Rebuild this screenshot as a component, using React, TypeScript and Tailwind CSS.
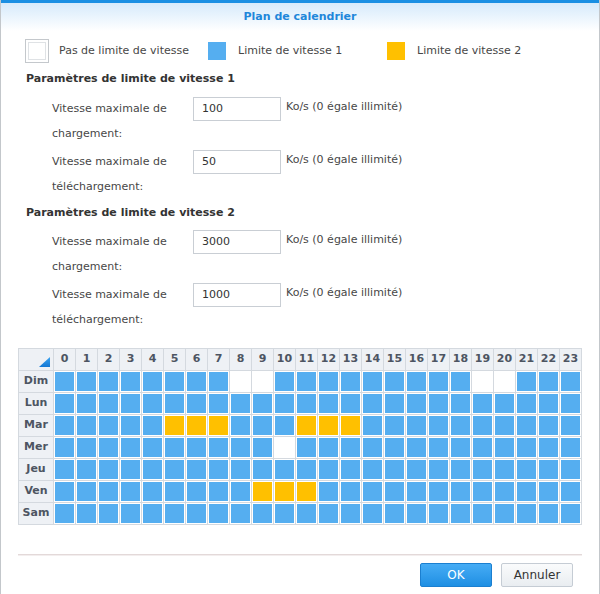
import React from "react";

const DAYS = ["Dim", "Lun", "Mar", "Mer", "Jeu", "Ven", "Sam"];
const HOURS = Array.from({ length: 24 }, (_, i) => i);

// 0 = pas de limite, 1 = limite 1, 2 = limite 2
const WHITE: Record<string, number[]> = { Dim: [8, 9, 19, 20], Mer: [10] };
const YELLOW: Record<string, number[]> = { Mar: [5, 6, 7, 11, 12, 13], Ven: [9, 10, 11] };

function level(day: string, h: number) {
  if (WHITE[day]?.includes(h)) return 0;
  if (YELLOW[day]?.includes(h)) return 2;
  return 1;
}

function Field({ line1, line2, value }: { line1: string; line2: string; value: string }) {
  return (
    <div className="flex pl-[51px]">
      <div className="w-[141px] leading-[25px] text-[#474747]">
        <div>{line1}</div>
        <div>{line2}</div>
      </div>
      <div className="mt-[1px] flex h-[24px] w-[88px] items-center border border-[#c9ced4] bg-white pl-[8px] text-[#333]">
        {value}
      </div>
      <div className="ml-[5px] leading-[22px] text-[#474747]">Ko/s (0 égale illimité)</div>
    </div>
  );
}

function Cell({ lvl }: { lvl: number }) {
  const fill = lvl === 0 ? "bg-white" : lvl === 1 ? "bg-[#55aef0]" : "bg-[#ffc000]";
  return (
    <div className="h-[21px] w-[21px] bg-white p-px">
      <div className={`h-full w-full ${fill}`} />
    </div>
  );
}

export default function App() {
  return (
    <div className="flex h-[594px] w-[600px] flex-col border-x border-[#c3c7cb] bg-white font-['DejaVu_Sans',sans-serif] text-[11px]">
      <div className="h-[3px] bg-[#1a8fe3]" />
      <div className="flex h-[28px] items-center justify-center bg-gradient-to-b from-[#d6eafb] to-white font-bold text-[#1f87da]">
        Plan de calendrier
      </div>

      {/* légende */}
      <div className="mt-[8px] flex h-[24px] items-center pl-[24px] text-[#474747]">
        <div className="flex w-[183px] items-center">
          <div className="h-[24px] w-[24px] border border-[#c4c8cc] p-[2px]">
            <div className="h-full w-full border border-[#dfe2e5]" />
          </div>
          <span className="ml-[10px]">Pas de limite de vitesse</span>
        </div>
        <div className="flex w-[179px] items-center">
          <div className="h-[18px] w-[18px] bg-[#55aef0]" />
          <span className="ml-[12px]">Limite de vitesse 1</span>
        </div>
        <div className="flex items-center">
          <div className="h-[18px] w-[18px] bg-[#ffc000]" />
          <span className="ml-[12px]">Limite de vitesse 2</span>
        </div>
      </div>

      <div className="mt-[9px] pl-[25px] font-bold leading-[14px] text-[#333]">Paramètres de limite de vitesse 1</div>
      <div className="mt-[10px] flex flex-col gap-[3px]">
        <Field line1="Vitesse maximale de" line2="chargement:" value="100" />
        <Field line1="Vitesse maximale de" line2="téléchargement:" value="50" />
      </div>

      <div className="mt-[7px] pl-[25px] font-bold leading-[14px] text-[#333]">Paramètres de limite de vitesse 2</div>
      <div className="mt-[9px] flex flex-col gap-[3px]">
        <Field line1="Vitesse maximale de" line2="chargement:" value="3000" />
        <Field line1="Vitesse maximale de" line2="téléchargement:" value="1000" />
      </div>

      {/* grille horaire */}
      <div className="ml-[17px] mt-[16px] grid w-fit grid-cols-[34px_repeat(24,21px)] gap-px border border-[#d4d9df] bg-[#d4d9df]">
        <div className="flex h-[21px] items-end justify-end bg-[#eef1f5] p-[3px]">
          <svg width="11" height="10" viewBox="0 0 11 10">
            <defs>
              <linearGradient id="tri" x1="0" y1="0" x2="0" y2="1">
                <stop offset="0" stopColor="#3aa3f0" />
                <stop offset="1" stopColor="#1478d4" />
              </linearGradient>
            </defs>
            <polygon points="11,0 11,10 0,10" fill="url(#tri)" />
          </svg>
        </div>
        {HOURS.map((h) => (
          <div key={h} className="flex h-[21px] items-center justify-center bg-[#eef1f5] font-bold text-[#4d5562]">
            {h}
          </div>
        ))}
        {DAYS.map((d) => (
          <React.Fragment key={d}>
            <div className="flex h-[21px] items-center justify-center bg-[#eef1f5] font-bold text-[#4d5562]">{d}</div>
            {HOURS.map((h) => (
              <Cell key={h} lvl={level(d, h)} />
            ))}
          </React.Fragment>
        ))}
      </div>

      <div className="ml-[17px] mt-[29px] h-[2px] w-[564px] border-t border-[#e3d9d9] bg-[#f3eeee]" />

      <div className="mt-[7px] flex justify-end gap-[9px] pr-[26px] text-[12px]">
        <button className="h-[24px] w-[72px] rounded-[2px] border border-[#1b7fd0] bg-gradient-to-b from-[#45acf5] to-[#1d8fe3] text-white">
          OK
        </button>
        <button className="h-[24px] w-[72px] rounded-[2px] border border-[#c5ccd4] bg-gradient-to-b from-[#fafbfc] to-[#e9edf1] text-[#333]">
          Annuler
        </button>
      </div>
    </div>
  );
}
